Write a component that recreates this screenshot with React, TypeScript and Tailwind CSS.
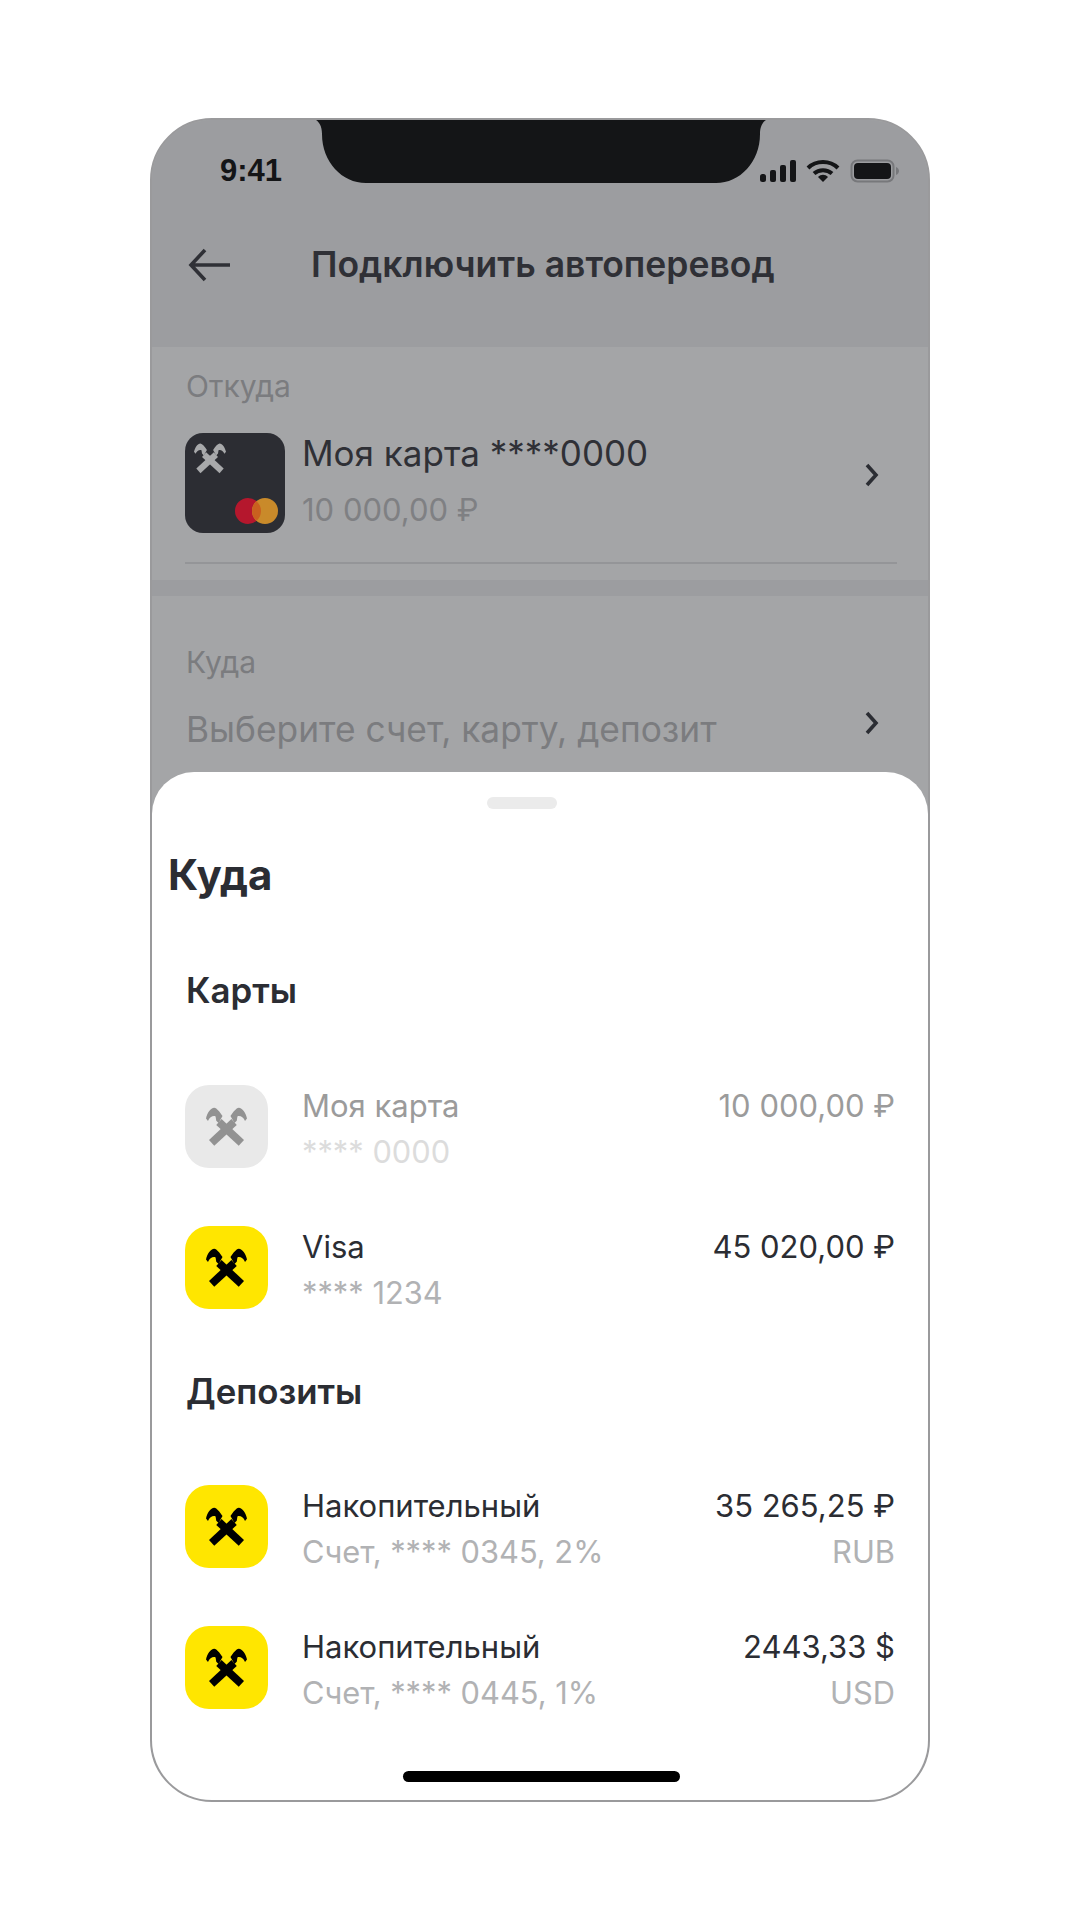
type LogoProps = {
  color: string;
  className: string;
};

// Raiffeisen crossed gables
const Logo = ({ color, className }: LogoProps) => {
  return (
    <svg viewBox="0 0 124 120" className={className} fill={color}>
      <path d="M9 99 L25 117 L93 54 L77 36 Z" />
      <path d="M115 99 L99 117 L31 54 L47 36 Z" />
      <path d="M0 34 C4 17 14 3 25 2 C33 3 41 14 50 27 L38 48 L31 41 L29 28 C22 25 11 29 6 42 Z" />
      <path d="M124 34 C120 17 110 3 99 2 C91 3 83 14 74 27 L86 48 L93 41 L95 28 C102 25 113 29 118 42 Z" />
    </svg>
  );
};

type RowProps = {
  name: string;
  sub: string;
  amount: string;
  unit?: string;
  disabled?: boolean;
};

const AccountRow = ({ name, sub, amount, unit, disabled }: RowProps) => {
  return (
    <div className="flex h-[83px] pl-[33px] pr-[33px]">
      <div className={`flex h-[83px] w-[83px] shrink-0 items-center justify-center rounded-[24px] ${disabled ? "bg-[#e9e9e9]" : "bg-[#ffe600]"}`}>
        <Logo color={disabled ? "#929292" : "#000000"} className="h-[40px] w-[41px]" />
      </div>
      <div className="ml-[34px] flex flex-1 flex-col gap-[6px] pt-px text-[31px] leading-[40px]">
        <div className="flex justify-between">
          <span className={disabled ? "text-[#9b9b9b]" : "text-[#2b2d33]"}>{name}</span>
          <span className={disabled ? "text-[#9b9b9b]" : "text-[#2b2d33]"}>{amount}</span>
        </div>
        <div className="flex justify-between text-[30.8px]">
          <span className={disabled ? "text-[#dcdcdc]" : "text-[#b1b2b4]"}>{sub}</span>
          {unit && <span className="text-[#b1b2b4]">{unit}</span>}
        </div>
      </div>
    </div>
  );
};

const Chevron = ({ className }: { className: string }) => {
  return (
    <svg viewBox="0 0 16 24" className={className} fill="none" stroke="#2b2d33" strokeWidth="3.6">
      <path d="M3 2 L12 12 L3 22" />
    </svg>
  );
};

const StatusIcons = () => {
  return (
    <div className="flex items-center">
      <svg width="36" height="24" viewBox="0 0 36 24" fill="#141517">
        <rect x="0" y="15" width="6" height="8" rx="2.5" />
        <rect x="10" y="11" width="6" height="12" rx="2" />
        <rect x="20" y="6" width="6" height="17" rx="2" />
        <rect x="30" y="1" width="6" height="22" rx="2" />
      </svg>
      <svg width="34" height="24" viewBox="0 0 34 24" fill="none" stroke="#141517" strokeWidth="4" className="ml-[10px]">
        <path d="M2 9 C10 1 24 1 32 9" />
        <path d="M8 14.5 C13 10 21 10 26 14.5" />
        <path d="M12 18 L17 23 L22 18 C19 15 15 15 12 18 Z" fill="#141517" stroke="none" />
      </svg>
      <svg width="50" height="24" viewBox="0 0 50 24" className="ml-[10px]">
        <rect x="1.5" y="1.5" width="42" height="21" rx="6" fill="none" stroke="#77787b" strokeWidth="2" />
        <rect x="4" y="4" width="37" height="16" rx="4" fill="#141517" />
        <path d="M46 8 C48 9 49 10.500 49 12 C49 13.500 48 15 46 16 Z" fill="#77787b" />
      </svg>
    </div>
  );
};

export default function App() {
  return (
    <div className="min-h-[1920px] bg-white pl-[150px] pt-[118px] font-['Inter',sans-serif]">
      <div className="relative flex h-[1684px] w-[780px] flex-col overflow-hidden rounded-[62px] border-2 border-[#9a9a9c] bg-[#a4a5a7]">
        <svg width="450" height="63" viewBox="0 0 450 63" fill="#141517" className="absolute left-[164px] top-0">
          <path d="M0 0 H450 C447 2 444 6 444 14 C444 42 424 63 400 63 H50 C26 63 6 42 6 14 C6 6 3 2 0 0 Z" />
        </svg>

        <div className="flex h-[652px] shrink-0 flex-col bg-[#9c9da0]">
          <div className="flex h-[102px] shrink-0 items-center justify-between pl-[68px] pr-[28px]">
            <span className="font-['Liberation_Sans',sans-serif] text-[31px] font-bold text-[#141517]">9:41</span>
            <StatusIcons />
          </div>
          <div className="flex h-[85px] shrink-0 items-center pl-[36px]">
            <svg width="42" height="34" viewBox="0 0 42 34" fill="none" stroke="#2f3036" strokeWidth="3.6" className="mt-[1px]">
              <path d="M42 17 L3 17 M17 2 L3 17 L17 32" />
            </svg>
            <span className="ml-[81px] text-[35.5px] font-semibold text-[#2f3036]">Подключить автоперевод</span>
          </div>

          <div className="mt-[40px] flex h-[233px] shrink-0 flex-col bg-[#a4a5a7] px-[34px] pt-[19px]">
            <div className="text-[30px] leading-[40px] text-[#7b7c7f]">Откуда</div>
            <div className="-ml-px mt-[27px] flex h-[100px] items-start">
              <div className="relative h-[100px] w-[100px] shrink-0 rounded-[18px] bg-[#2c2d33]">
                <Logo color="#a8a9ab" className="absolute left-[9px] top-[10px] h-[31px] w-[32px]" />
                <svg width="44" height="26" viewBox="0 0 44 26" className="absolute left-[50px] top-[65px]">
                  <circle cx="13" cy="13" r="13" fill="#b5172d" />
                  <circle cx="30" cy="13" r="13" fill="#c98a2a" />
                  <path d="M21.500 3.200 A13 13 0 0 1 21.500 22.800 A13 13 0 0 1 21.500 3.200 Z" fill="#c9601f" />
                </svg>
              </div>
              <div className="ml-[17px] flex-1 text-[35px] leading-[40px] text-[#2f3036]">
                <div>Моя карта ****0000</div>
                <div className="mt-[17px] text-[31px] text-[#7f8083]">10 000,00 ₽</div>
              </div>
              <Chevron className="mr-[14px] mt-[30px] h-[24px] w-[16px]" />
            </div>
            <div className="-ml-px -mr-[3px] mt-[29px] h-[2px] bg-[#949598]" />
          </div>
          <div className="h-[16px] shrink-0 bg-[#9c9da0]" />
          <div className="flex flex-1 flex-col bg-[#a4a5a7] px-[34px] pt-[46px]">
            <div className="text-[30px] leading-[40px] text-[#7b7c7f]">Куда</div>
            <div className="mt-[28px] flex items-start justify-between">
              <span className="text-[35.3px] leading-[40px] text-[#7b7c7f]">Выберите счет, карту, депозит</span>
              <Chevron className="mr-[14px] mt-[1px] h-[24px] w-[16px]" />
            </div>
          </div>
        </div>

        <div className="flex flex-1 flex-col rounded-t-[42px] bg-white">
          <div className="ml-[335px] mt-[25px] h-[12px] w-[70px] rounded-[6px] bg-[#ebebeb]" />
          <div className="ml-[16px] mt-[38px] text-[42px] font-bold leading-[56px] text-[#2b2d33]">Куда</div>
          <div className="ml-[34px] mt-[67px] text-[34.8px] font-semibold leading-[40px] text-[#2b2d33]">Карты</div>
          <div className="mt-[75px] flex flex-col gap-[58px]">
            <AccountRow name="Моя карта" sub="**** 0000" amount="10 000,00 ₽" disabled />
            <AccountRow name="Visa" sub="**** 1234" amount="45 020,00 ₽" />
          </div>
          <div className="ml-[34px] mt-[62px] text-[34.8px] font-semibold leading-[40px] text-[#2b2d33]">Депозиты</div>
          <div className="mt-[74px] flex flex-col gap-[58px]">
            <AccountRow name="Накопительный" sub="Счет, **** 0345, 2%" amount="35 265,25 ₽" unit="RUB" />
            <AccountRow name="Накопительный" sub="Счет, **** 0445, 1%" amount="2443,33 $" unit="USD" />
          </div>
          <div className="ml-[251px] mt-[62px] h-[11px] w-[277px] rounded-full bg-black" />
        </div>
      </div>
    </div>
  );
}
